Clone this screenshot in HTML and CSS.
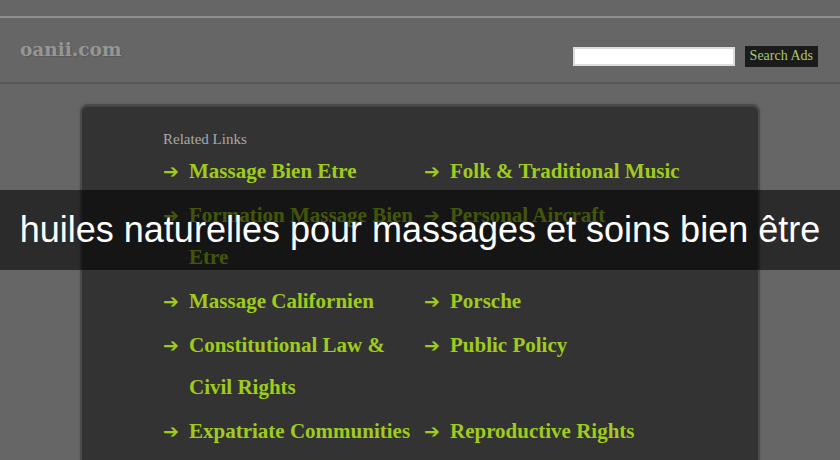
FILE: index.html
```html
<!DOCTYPE html>
<html lang="fr">
<head>
    <meta charset="UTF-8">
    <meta name="viewport" content="width=device-width, initial-scale=1.0">
    <title>oanii.com</title>
    <link rel="stylesheet" href="styles.css">
</head>
<body>
    <div class="topbar"></div>
    <div class="header">
        <div class="logo">oanii.com</div>
        <form class="search">
            <input type="text" class="search-input">
            <button type="button" class="search-btn">Search Ads</button>
        </form>
    </div>

    <div class="panel">
        <h2 class="related">Related Links</h2>
        <ul class="links">
            <li><span class="arrow">&#10132;</span><a href="#">Massage Bien Etre</a></li>
            <li><span class="arrow">&#10132;</span><a href="#">Folk &amp; Traditional Music</a></li>
            <li><span class="arrow">&#10132;</span><a href="#">Formation Massage Bien Etre</a></li>
            <li><span class="arrow">&#10132;</span><a href="#">Personal Aircraft</a></li>
            <li><span class="arrow">&#10132;</span><a href="#">Massage Californien</a></li>
            <li><span class="arrow">&#10132;</span><a href="#">Porsche</a></li>
            <li><span class="arrow">&#10132;</span><a href="#">Constitutional Law &amp; Civil Rights</a></li>
            <li><span class="arrow">&#10132;</span><a href="#">Public Policy</a></li>
            <li><span class="arrow">&#10132;</span><a href="#">Expatriate Communities</a></li>
            <li><span class="arrow">&#10132;</span><a href="#">Reproductive Rights</a></li>
        </ul>
    </div>

    <div class="banner">huiles naturelles pour massages et soins bien être</div>
</body>
</html>
```

FILE: styles.css
```css
body {
    margin: 0;
    background-color: #666;
    font-family: "Liberation Serif", serif;
    overflow: hidden;
}
.topbar {
    height: 16px;
}
.header {
    display: flex;
    align-items: center;
    justify-content: space-between;
    height: 64px;
    border-top: 2px solid #8e8e8e;
    border-bottom: 2px solid #585858;
    padding: 0 22px 0 20px;
}
.logo {
    font-family: "DejaVu Serif", serif;
    font-size: 18.5px;
    font-weight: bold;
    color: #969696;
    text-shadow: 1px 1px 1px #5a5a5a;
    margin-top: -2px;
}
.search {
    display: flex;
    align-items: center;
    gap: 10px;
    margin-top: 12px;
}
.search-input {
    width: 158px;
    height: 15px;
    border: 2px solid #ddd;
    background: #fff;
    padding: 0;
}
.search-btn {
    background: #1b1b1b;
    color: #a8c87a;
    border: none;
    font-family: "Liberation Serif", serif;
    font-size: 14px;
    padding: 2px 5px;
    height: 21px;
    cursor: pointer;
}
.panel {
    width: 680px;
    min-height: 400px;
    margin: 20px 0 0 80px;
    padding: 25px 0 0 81px;
    box-sizing: border-box;
    background-color: #333;
    border: 2px solid #4a4a4a;
    border-radius: 8px;
    box-shadow: 0 0 3px #555, inset 0 1px 0 #444;
}
.related {
    margin: 0 0 2px 0;
    font-family: "Liberation Serif", serif;
    font-size: 15px;
    font-weight: normal;
    color: #a8a8a8;
}
.links {
    list-style: none;
    margin: 0;
    padding: 0;
    display: grid;
    grid-template-columns: 261px 261px;
    row-gap: 2px;
}
.links li {
    display: flex;
    line-height: 42px;
}
.arrow {
    flex: 0 0 26px;
    color: #9fcb1c;
    font-family: "DejaVu Sans", sans-serif;
    font-size: 19px;
}
.links a {
    width: 232px;
    color: #9fcb1c;
    text-decoration: none;
    font-family: "Liberation Serif", serif;
    font-size: 21px;
    font-weight: bold;
}
.banner {
    position: absolute;
    top: 190px;
    left: 0;
    right: 0;
    height: 80px;
    line-height: 80px;
    background: rgba(0, 0, 0, 0.58);
    color: #fff;
    text-align: center;
    font-family: "Liberation Sans", Arial, sans-serif;
    font-size: 36px;
}
```
